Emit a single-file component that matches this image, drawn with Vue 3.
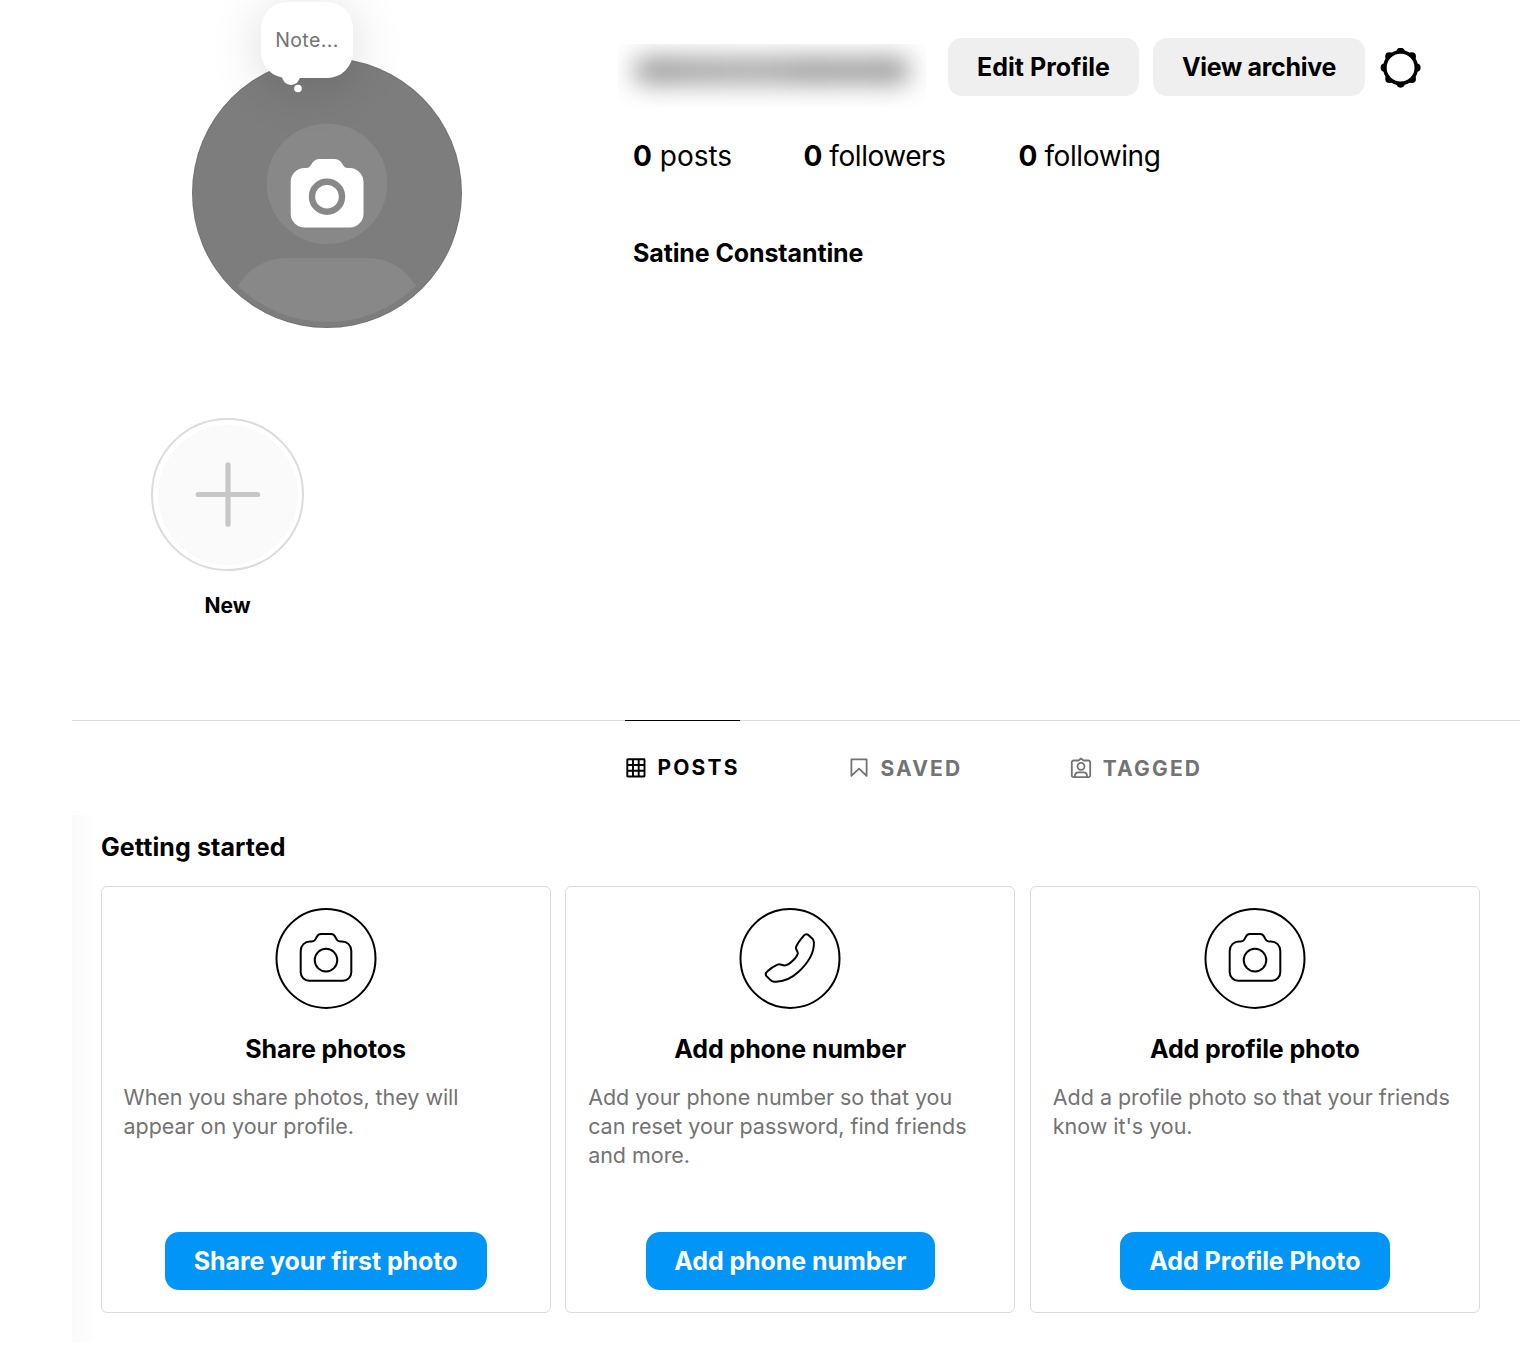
<script setup>
const stats = [
  { value: 0, label: 'posts', cls: 'stat-posts' },
  { value: 0, label: 'followers', cls: 'stat-followers' },
  { value: 0, label: 'following', cls: 'stat-following' },
]

const cards = [
  {
    icon: 'camera',
    title: 'Share photos',
    lines: ['When you share photos, they will', 'appear on your profile.'],
    action: 'Share your first photo',
    width: 322,
  },
  {
    icon: 'phone',
    title: 'Add phone number',
    lines: ['Add your phone number so that you', 'can reset your password, find friends', 'and more.'],
    action: 'Add phone number',
    width: 289,
  },
  {
    icon: 'camera',
    title: 'Add profile photo',
    lines: ['Add a profile photo so that your friends', "know it's you."],
    action: 'Add Profile Photo',
    width: 270,
  },
]

const gearTeeth = Array.from({ length: 8 }, (_, i) => {
  const a = (i * Math.PI) / 4
  return { x: 20 + 15.9 * Math.cos(a), y: 20 + 15.9 * Math.sin(a) }
})
</script>

<template>
  <main class="page">
    <header class="profile">
      <div class="avatar">
        <svg class="avatar-art" width="270" height="270" viewBox="0 0 270 270">
          <circle cx="135" cy="135" r="135" fill="#737373" />
          <circle cx="135" cy="135" r="134" fill="#7d7d7d" />
          <circle cx="135" cy="125.7" r="60.3" fill="#888" />
          <path d="M46 228C56 211 73 200 95 200H175C197 200 214 211 224 228A128 128 0 0 1 46 228Z" fill="#888" />
          <path
            d="M112.7 110H114.5C118 110 119 106.6 121 104Q123.5 101 127.5 101H142.5Q146.5 101 149 104C151 106.6 152 110 155.500 110H157.7A14 14 0 0 1 171.5 124V156A13.7 13.7 0 0 1 157.8 169.500H112.400A13.7 13.7 0 0 1 98.7 156V124A14 14 0 0 1 112.7 110Z"
            fill="#fff"
          />
          <circle cx="135" cy="138.700" r="15" fill="none" stroke="#888" stroke-width="6.4" />
        </svg>
        <div class="note">
          <span>Note...</span>
          <i class="bump"></i>
          <svg class="dot" width="10" height="10" viewBox="0 0 10 10"><circle cx="5" cy="4.500" r="3.800" fill="#fff" /></svg>
        </div>
      </div>

      <div class="details">
        <div class="top-row">
          <div class="username"><div class="redacted"></div></div>
          <button class="btn btn-gray edit">Edit Profile</button>
          <button class="btn btn-gray archive">View archive</button>
          <svg class="gear" width="41" height="40" viewBox="-0.6 0.3 41 40">
            <circle cx="20" cy="20" r="17.600" />
            <circle v-for="(t, i) in gearTeeth" :key="i" :cx="t.x" :cy="t.y" r="4.100" />
            <circle cx="20" cy="20" r="13.900" fill="#fff" />
          </svg>
        </div>
        <ul class="stats">
          <li v-for="s in stats" :key="s.label" :class="s.cls"><b>{{ s.value }}</b> {{ s.label }}</li>
        </ul>
        <h1 class="name">Satine Constantine</h1>
      </div>
    </header>

    <section class="highlights">
      <div class="highlight">
        <div class="ring">
          <div class="disc">
            <svg width="66" height="66" viewBox="0 0 66 66">
              <path d="M33 2.800V62.200M3.200 32.500H62.600" stroke="#c7c7c7" stroke-width="5.200" stroke-linecap="round" />
            </svg>
          </div>
        </div>
        <span class="new">New</span>
      </div>
    </section>

    <nav class="tabs">
      <a class="tab active">
        <svg width="22" height="22" viewBox="0 0 22 22" fill="none" stroke="currentColor" stroke-width="1.900">
          <rect x="2.300" y="2.300" width="17.200" height="17.200" rx=".5" />
          <path d="M8 2V20M13.700 2V20M2 8H20M2 13.700H20" />
        </svg>
        <span>POSTS</span>
      </a>
      <a class="tab saved">
        <svg width="22" height="22" viewBox="0 0 22 22" fill="none" stroke="currentColor" stroke-width="1.800">
          <path d="M3.400 2.300H18.600V18.900L11 11.700L3.400 18.900Z" stroke-linejoin="round" />
        </svg>
        <span>SAVED</span>
      </a>
      <a class="tab tagged">
        <svg width="22" height="22" viewBox="0 0 22 22" fill="none" stroke="currentColor" stroke-width="1.800" stroke-linecap="round" stroke-linejoin="round">
          <path d="M8.500 3.500L11 1.500L13.500 3.500H18.400A1.800 1.800 0 0 1 20.200 5.300V18.400A1.800 1.800 0 0 1 18.400 20.200H3.600A1.800 1.800 0 0 1 1.800 18.400V5.300A1.800 1.800 0 0 1 3.600 3.500Z" />
          <circle cx="11" cy="9.300" r="3.500" />
          <path d="M4.900 19.800V19A3.800 3.800 0 0 1 8.700 15.400H13.300A3.800 3.800 0 0 1 17.100 19V19.800" />
        </svg>
        <span>TAGGED</span>
      </a>
    </nav>

    <section class="started">
      <h2>Getting started</h2>
      <div class="cards">
        <article v-for="c in cards" :key="c.title" class="card">
          <svg width="102" height="102" viewBox="0 -0.4 102 102" fill="none" stroke="#000" stroke-width="2">
            <circle cx="51" cy="51" r="49.500" />
            <template v-if="c.icon === 'camera'">
              <path d="M35 34H37C38.700 34 39.900 33.100 40.700 31.500L41.700 29.600C42.600 27.800 43.900 26.700 46 26.700H56C58.100 26.700 59.400 27.800 60.300 29.600L61.300 31.500C62.100 33.100 63.300 34 65 34H67A9.300 9.300 0 0 1 76.300 43.300V64.800A8.500 8.500 0 0 1 67.800 73.300H34.200A8.500 8.500 0 0 1 25.700 64.800V43.300A9.300 9.300 0 0 1 35 34Z" />
              <circle cx="51" cy="52.700" r="11.300" />
            </template>
            <path
              v-else
              d="M65 28Q67 25.800 69.400 27.600L73.400 31.300Q74.900 33 74.900 35.500C75.300 47 67 57.500 59.300 64.700C52 71.500 43.500 74.800 35 74.300Q33 74.100 31.500 72.700L27.300 68.500Q25.700 66.200 28.200 64Q33 59.600 38.500 57.200C41 56 43 58.200 46 58C50 57.800 57.500 50.500 58.800 46.300C59.200 44 56.500 42.500 57 40Q57.800 36.500 65 28Z"
            />
          </svg>
          <h3>{{ c.title }}</h3>
          <p><span v-for="l in c.lines" :key="l">{{ l }}</span></p>
          <button class="btn btn-blue" :style="{ width: c.width + 'px' }">{{ c.action }}</button>
        </article>
      </div>
    </section>
  </main>
</template>

<style>
body {
  background: #fff;
}
</style>

<style scoped>
.page {
  width: 1520px;
  height: 1346px;
  overflow: hidden;
  display: flex;
  flex-direction: column;
  box-sizing: border-box;
  padding-left: 72px;
  background: #fff;
  color: #000;
  font-family: Inter, "Liberation Sans", sans-serif;
}
h1, h2, h3, p, ul {
  margin: 0;
  padding: 0;
}
.profile {
  display: flex;
  height: 418px;
}
.avatar {
  position: relative;
  width: 270px;
  height: 270px;
  margin: 58px 156px 0 120px;
}
.avatar-art {
  display: block;
}
.note {
  position: absolute;
  left: 69px;
  top: -56px;
  width: 92px;
  height: 76px;
  border-radius: 26px;
  background: #fff;
  box-shadow: 0 7px 52px rgba(0, 0, 0, 0.15);
  display: flex;
  align-items: center;
  justify-content: center;
  color: #737373;
  font-size: 19.5px;
  letter-spacing: 0.4px;
}
.bump, .dot {
  position: absolute;
}
.bump {
  left: 21px;
  top: 65px;
  width: 18px;
  height: 18px;
  border-radius: 50%;
  background: #fff;
}
.dot {
  left: 32px;
  top: 82px;
}
.details {
  flex: 1;
}
.top-row {
  display: flex;
  margin-top: 38px;
  height: 66px;
}
.username {
  box-sizing: border-box;
  width: 308px;
  height: 64px;
  margin: 6px 22px 0 0;
  padding: 14px 17px;
  overflow: hidden;
}
.redacted {
  height: 25px;
  border-radius: 9px;
  background: linear-gradient(90deg, #8c8c8c, #999 20%, #a0a0a0 45%, #929292 65%, #989898 80%, #8c8c8c);
  filter: blur(13px);
}
.btn {
  display: flex;
  align-items: center;
  justify-content: center;
  height: 58px;
  padding: 0;
  border: 0;
  border-radius: 14px;
  font: 700 25px Inter, "Liberation Sans", sans-serif;
  white-space: nowrap;
}
.btn-gray {
  background: #efefef;
  color: #000;
  margin-right: 14px;
}
.edit {
  width: 191px;
  letter-spacing: 0.05px;
}
.archive {
  width: 212px;
  letter-spacing: -0.3px;
}
.btn-blue {
  background: #0095f6;
  color: #fff;
  letter-spacing: -0.08px;
}
.gear {
  margin: 10px 0 0 1px;
}
.stats {
  display: flex;
  margin: 35px 0 0 15px;
  list-style: none;
  font-size: 28px;
  line-height: 34px;
}
.stats b {
  font-weight: 700;
}
.stat-posts {
  width: 170.5px;
}
.stat-followers {
  width: 215px;
  letter-spacing: -0.45px;
}
.stat-following {
  letter-spacing: -0.4px;
}
.name {
  margin: 64px 0 0 15px;
  font-size: 25px;
  font-weight: 700;
  line-height: 32px;
  letter-spacing: -0.11px;
}
.highlights {
  height: 302px;
}
.highlight {
  display: flex;
  flex-direction: column;
  align-items: center;
  width: 153px;
  margin-left: 79px;
}
.ring {
  box-sizing: border-box;
  width: 153px;
  height: 153px;
  padding: 4.5px;
  border: 2px solid #dbdbdb;
  border-radius: 50%;
}
.disc {
  display: flex;
  align-items: center;
  justify-content: center;
  height: 140px;
  border-radius: 50%;
  background: #fafafa;
}
.new {
  margin-top: 21px;
  font-size: 21px;
  font-weight: 700;
  line-height: 28px;
}
.tabs {
  display: flex;
  gap: 108px;
  height: 95px;
  box-sizing: border-box;
  padding-left: 553px;
  border-top: 1px solid #dbdbdb;
}
.tab {
  display: flex;
  align-items: center;
  box-sizing: border-box;
  height: 95px;
  margin-top: -1px;
  gap: 10.5px;
  color: #737373;
  font-size: 21px;
  font-weight: 700;
  letter-spacing: 2.15px;
  border-top: 1px solid transparent;
}
.active {
  width: 115px;
  color: #000;
  border-top-color: #000;
}
.active span {
  margin-top: -2px;
}
.started {
  box-sizing: border-box;
  height: 527px;
  padding: 16px 40px 0 29px;
  background: linear-gradient(90deg, #fafafa, #fff 26px);
}
.started h2 {
  font-size: 25px;
  font-weight: 700;
  line-height: 32px;
  letter-spacing: 0.1px;
}
.cards {
  display: grid;
  grid-template-columns: repeat(3, 1fr);
  gap: 14.5px;
  margin: 23px 0 0 -0.5px;
}
.card {
  display: flex;
  flex-direction: column;
  align-items: center;
  box-sizing: border-box;
  height: 427px;
  padding: 20px 22px 22px;
  border: 1px solid #dbdbdb;
  border-radius: 6px;
  background: #fff;
}
.card h3 {
  margin-top: 24px;
  font-size: 25px;
  font-weight: 700;
  line-height: 32px;
  letter-spacing: -0.1px;
}
.card p {
  align-self: stretch;
  margin-top: 18px;
  color: #737373;
  font-size: 21.5px;
  line-height: 29px;
  letter-spacing: -0.04px;
}
.card p span {
  display: block;
  white-space: nowrap;
}
.card .btn {
  margin-top: auto;
}
</style>
